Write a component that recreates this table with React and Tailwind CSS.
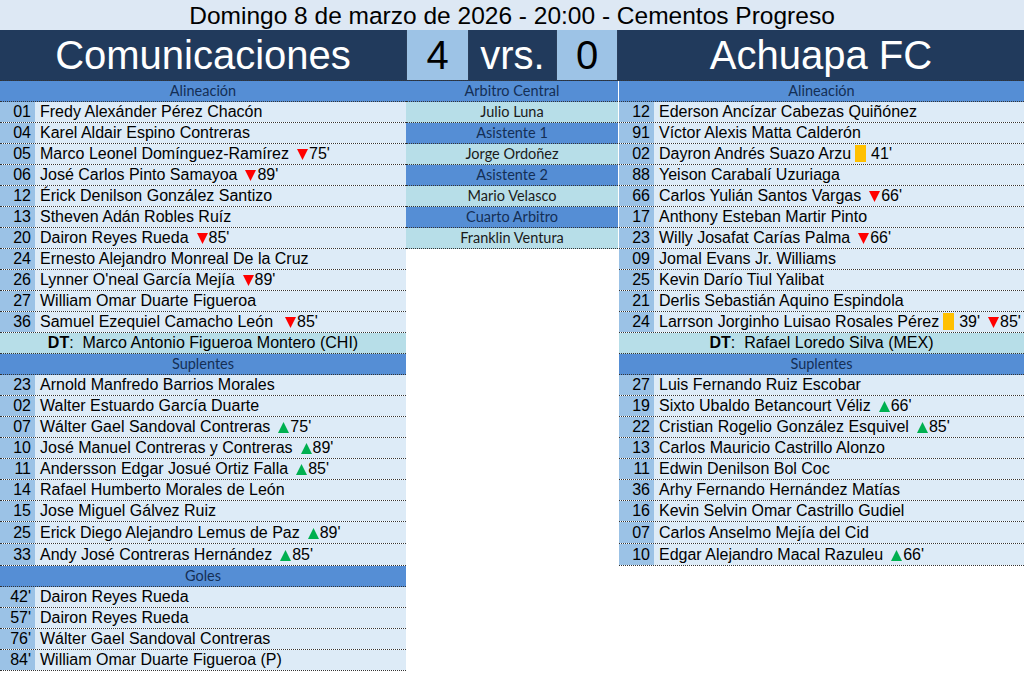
import React from "react";

const DOWN = "down";
const UP = "up";
const CARD = "card";

function Tri({ dir }) {
  if (dir === DOWN) {
    return (
      <svg width="11" height="11" viewBox="0 0 11 11" className="inline-block align-[-1px] mr-[1px]">
        <polygon points="0,0 11,0 5.5,11" fill="#ff0000" />
      </svg>
    );
  }
  return (
    <svg width="11" height="11" viewBox="0 0 11 11" className="inline-block align-[-1px] mr-[1px]">
      <polygon points="0,11 11,11 5.5,0" fill="#00b050" />
    </svg>
  );
}

function Card() {
  return <span className="inline-block w-[11px] h-[17px] bg-[#ffc000] align-[-3px] ml-[4px] mr-[5px]" />;
}

function Extra({ items }) {
  if (!items) return null;
  return (
    <>
      {items.map((it, i) => {
        if (it.t === CARD) {
          return (
            <span key={i}>
              <Card />
              {it.m}
            </span>
          );
        }
        return (
          <span key={i} className={it.sp ? "ml-[12px]" : "ml-[8px]"}>
            <Tri dir={it.t} />
            {it.m}
          </span>
        );
      })}
    </>
  );
}

function PlayerRow({ num, name, extra, tall }) {
  return (
    <div
      className={
        (tall ? "h-[22px] leading-[21px] " : "h-[21px] leading-[20px] ") +
        "flex border-b border-dotted border-[#333] text-[16px] text-black whitespace-nowrap"
      }
    >
      <div className="w-[35px] shrink-0 bg-[#9bc2e6] text-right pr-[4px]">{num}</div>
      <div className="flex-1 bg-[#ddebf7] pl-[5px] overflow-hidden">
        {name}
        <Extra items={extra} />
      </div>
    </div>
  );
}

function SectionRow({ children }) {
  return (
    <div className="h-[21px] border-b border-dotted border-[#333] bg-[#558ed5] text-center font-['Lato',sans-serif] text-[14.5px] leading-[20px] text-[#142f55]">
      {children}
    </div>
  );
}

function DTRow({ name }) {
  return (
    <div className="h-[21px] border-b border-dotted border-[#333] bg-[#b7dee8] text-center text-[16px] leading-[20px] text-black whitespace-nowrap">
      <span className="font-bold">DT</span>:&nbsp; {name}
    </div>
  );
}

function RefName({ children }) {
  return (
    <div className="h-[21px] border-b border-dotted border-[#333] bg-[#b7dee8] text-center font-['Lato',sans-serif] text-[14.5px] leading-[20px] text-[#1a1a1a]">
      {children}
    </div>
  );
}

const leftStarters = [
  ["01", "Fredy Alexánder Pérez Chacón"],
  ["04", "Karel Aldair Espino Contreras"],
  ["05", "Marco Leonel Domínguez-Ramírez", [{ t: DOWN, m: "75'" }]],
  ["06", "José Carlos Pinto Samayoa", [{ t: DOWN, m: "89'" }]],
  ["12", "Érick Denilson González Santizo"],
  ["13", "Stheven Adán Robles Ruíz"],
  ["20", "Dairon Reyes Rueda", [{ t: DOWN, m: "85'" }]],
  ["24", "Ernesto Alejandro Monreal De la Cruz"],
  ["26", "Lynner O'neal García Mejía", [{ t: DOWN, m: "89'" }]],
  ["27", "William Omar Duarte Figueroa"],
  ["36", "Samuel Ezequiel Camacho León", [{ t: DOWN, m: "85'", sp: true }]],
];

const leftSubs = [
  ["23", "Arnold Manfredo Barrios Morales"],
  ["02", "Walter Estuardo García Duarte"],
  ["07", "Wálter Gael Sandoval Contreras", [{ t: UP, m: "75'" }]],
  ["10", "José Manuel Contreras y Contreras", [{ t: UP, m: "89'" }]],
  ["11", "Andersson Edgar Josué Ortiz Falla", [{ t: UP, m: "85'" }]],
  ["14", "Rafael Humberto Morales de León"],
  ["15", "Jose Miguel Gálvez Ruiz"],
  ["25", "Erick Diego Alejandro Lemus de Paz", [{ t: UP, m: "89'" }]],
  ["33", "Andy José Contreras Hernández", [{ t: UP, m: "85'" }]],
];

const goals = [
  ["42'", "Dairon Reyes Rueda"],
  ["57'", "Dairon Reyes Rueda"],
  ["76'", "Wálter Gael Sandoval Contreras"],
  ["84'", "William Omar Duarte Figueroa (P)"],
];

const rightStarters = [
  ["12", "Ederson Ancízar Cabezas Quiñónez"],
  ["91", "Víctor Alexis Matta Calderón"],
  ["02", "Dayron Andrés Suazo Arzu", [{ t: CARD, m: "41'" }]],
  ["88", "Yeison Carabalí Uzuriaga"],
  ["66", "Carlos Yulián Santos Vargas", [{ t: DOWN, m: "66'" }]],
  ["17", "Anthony Esteban Martir Pinto"],
  ["23", "Willy Josafat Carías Palma", [{ t: DOWN, m: "66'" }]],
  ["09", "Jomal Evans Jr. Williams"],
  ["25", "Kevin Darío Tiul Yalibat"],
  ["21", "Derlis Sebastián Aquino Espindola"],
  ["24", "Larrson Jorginho Luisao Rosales Pérez", [{ t: CARD, m: "39'" }, { t: DOWN, m: "85'" }]],
];

const rightSubs = [
  ["27", "Luis Fernando Ruiz Escobar"],
  ["19", "Sixto Ubaldo Betancourt Véliz", [{ t: UP, m: "66'" }]],
  ["22", "Cristian Rogelio González Esquivel", [{ t: UP, m: "85'" }]],
  ["13", "Carlos Mauricio Castrillo Alonzo"],
  ["11", "Edwin Denilson Bol Coc"],
  ["36", "Arhy Fernando Hernández Matías"],
  ["16", "Kevin Selvin Omar Castrillo Gudiel"],
  ["07", "Carlos Anselmo Mejía del Cid"],
  ["10", "Edgar Alejandro Macal Razuleu", [{ t: UP, m: "66'" }]],
];

export default function App() {
  return (
    <div className="w-[1024px] h-[673px] bg-white overflow-hidden font-['Liberation_Sans',Arial,sans-serif]">
      <div className="h-[30px] bg-[#dde8f4] flex items-center justify-center text-[24.5px] leading-none text-black pt-[3px]">
        Domingo 8 de marzo de 2026 - 20:00 - Cementos Progreso
      </div>
      <div className="h-[51px] bg-[#213a5c] flex border-b border-dotted border-[#333]">
        <div className="w-[406px] flex items-center justify-center text-white text-[40px] leading-none">
          Comunicaciones
        </div>
        <div className="w-[63px] bg-[#9dc3e6] border-l border-r border-[#2a3f5c] flex items-center justify-center text-black text-[40px] leading-none">
          4
        </div>
        <div className="w-[87px] flex items-center justify-center text-white text-[40px] leading-none">
          vrs.
        </div>
        <div className="w-[62px] bg-[#9dc3e6] border-l border-r border-[#2a3f5c] flex items-center justify-center text-black text-[40px] leading-none">
          0
        </div>
        <div className="flex-1 flex items-center justify-center text-white text-[40px] leading-none">
          Achuapa FC
        </div>
      </div>
      <div className="flex items-start">
        <div className="w-[406px] shrink-0">
          <SectionRow>Alineación</SectionRow>
          {leftStarters.map((p, i) => (
            <PlayerRow key={i} num={p[0]} name={p[1]} extra={p[2]} />
          ))}
          <DTRow name="Marco Antonio Figueroa Montero (CHI)" />
          <SectionRow>Suplentes</SectionRow>
          {leftSubs.map((p, i) => (
            <PlayerRow key={i} num={p[0]} name={p[1]} extra={p[2]} tall={i >= 7} />
          ))}
          <SectionRow>Goles</SectionRow>
          {goals.map((p, i) => (
            <PlayerRow key={i} num={p[0]} name={p[1]} />
          ))}
        </div>
        <div className="w-[212px] shrink-0">
          <SectionRow>Arbitro Central</SectionRow>
          <RefName>Julio Luna</RefName>
          <SectionRow>Asistente 1</SectionRow>
          <RefName>Jorge Ordoñez</RefName>
          <SectionRow>Asistente 2</SectionRow>
          <RefName>Mario Velasco</RefName>
          <SectionRow>Cuarto Arbitro</SectionRow>
          <RefName>Franklin Ventura</RefName>
        </div>
        <div className="flex-1 ml-px min-w-0">
          <SectionRow>Alineación</SectionRow>
          {rightStarters.map((p, i) => (
            <PlayerRow key={i} num={p[0]} name={p[1]} extra={p[2]} />
          ))}
          <DTRow name="Rafael Loredo Silva (MEX)" />
          <SectionRow>Suplentes</SectionRow>
          {rightSubs.map((p, i) => (
            <PlayerRow key={i} num={p[0]} name={p[1]} extra={p[2]} tall={i >= 7} />
          ))}
        </div>
      </div>
    </div>
  );
}
